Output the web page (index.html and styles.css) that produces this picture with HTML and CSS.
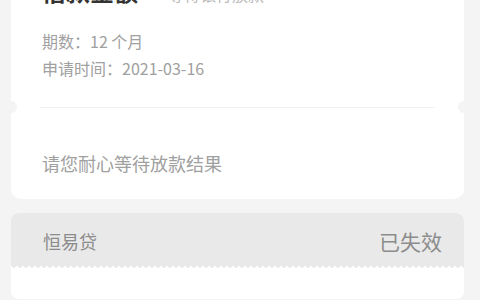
FILE: index.html
```html
<!DOCTYPE html>
<html lang="zh">
<head>
<meta charset="utf-8">
<link rel="stylesheet" href="styles.css">
</head>
<body>
<div class="page">
  <div class="card card-apply">
    <div class="card-top">
      <div class="title-row"><span class="amount">借款金额</span><span class="status-sub">等待银行放款</span></div>
      <div class="info-row">期数：12 个月</div>
      <div class="info-row">申请时间：2021-03-16</div>
    </div>
    <div class="divider"></div>
    <div class="card-bottom">
      <p class="notice">请您耐心等待放款结果</p>
    </div>
  </div>
  <div class="card card-expired">
    <div class="card-head">
      <span class="product">恒易贷</span>
      <span class="state">已失效</span>
    </div>
    <div class="card-body"></div>
  </div>
</div>
</body>
</html>
```
FILE: styles.css
```css
html, body {
  margin: 0;
  padding: 0;
  background: #f4f4f4;
  font-family: "Noto Sans CJK SC", "Noto Sans", sans-serif;
  overflow: hidden;
}
.page {
  padding: 0 16px 0 11px;
  display: flex;
  flex-direction: column;
  gap: 14px;
  margin-top: -42px;
}
.card {
  background: #fff;
  border-radius: 10px;
  position: relative;
}
.card-top {
  padding: 14px 31px 0;
  height: 149px;
  box-sizing: border-box;
}
.title-row {
  display: flex;
  align-items: baseline;
  gap: 30px;
  height: 56px;
  line-height: 37px;
}
.amount {
  font-size: 24px;
  font-weight: bold;
  color: #333;
}
.status-sub {
  font-size: 16px;
  color: #bbb;
}
.info-row {
  font-size: 16px;
  color: #a0a0a0;
  line-height: 27px;
}
.divider {
  position: relative;
  height: 1px;
  margin: 0 29px;
  background: #f2f2f2;
}
.divider::before,
.divider::after {
  content: "";
  position: absolute;
  top: -6px;
  width: 12px;
  height: 12px;
  border-radius: 50%;
  background: #f4f4f4;
}
.divider::before { left: -35px; }
.divider::after { right: -35px; }
.card-bottom {
  height: 91px;
  padding: 0 31px;
  display: flex;
  align-items: center;
}
.notice {
  margin: 18px 0 0;
  font-size: 18px;
  color: #a0a0a0;
}
.card-expired {
  border-radius: 8px;
  overflow: hidden;
}
.card-head {
  position: relative;
  height: 56px;
  background: #e9e9e9;
  display: flex;
  align-items: center;
  justify-content: space-between;
  padding: 0 22px 0 32px;
}
.card-head::after {
  content: "";
  position: absolute;
  left: 0;
  right: 0;
  bottom: 0;
  height: 3px;
  background:
    linear-gradient(135deg, transparent 66%, #fff 66%) 0 0 / 6px 3px repeat-x,
    linear-gradient(225deg, transparent 66%, #fff 66%) 0 0 / 6px 3px repeat-x;
}
.product {
  font-size: 18px;
  color: #8c8c8c;
}
.state {
  font-size: 21px;
  color: #8c8c8c;
}
.card-body {
  height: 30px;
  background: #fff;
}
```
